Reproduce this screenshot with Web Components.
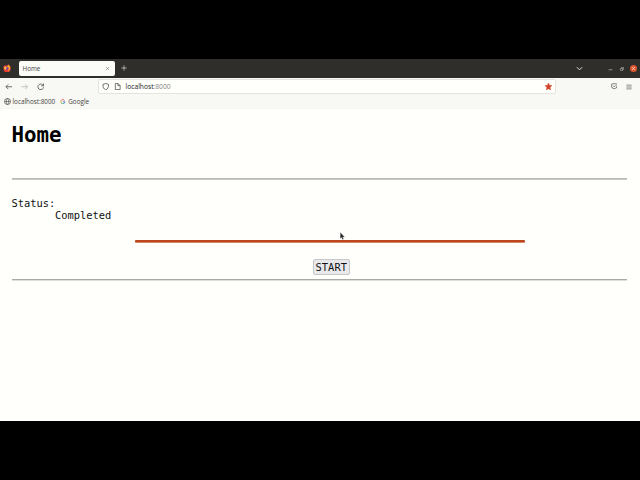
<!DOCTYPE html>
<html lang="en"><head><meta charset="utf-8"><title>Home</title>
<style>html,body{margin:0;height:480px;background:#000;overflow:hidden}</style></head>
<body><browser-window></browser-window>
<script>
const define = (name, html) => customElements.define(name, class extends HTMLElement {
  constructor() { super(); this.attachShadow({mode: 'open'}).innerHTML = html; }
});

const icons = {
  back: '<path d="M15 8H2M7 3 2 8l5 5"/>',
  forward: '<path d="M1 8h13M9 3l5 5-5 5"/>',
  reload: '<path d="M14 9A6 6 0 1 1 12 3.800L14 6M14 1v5H9"/>',
  shield: '<path d="M8 1 14 3c0 6-1 9-6 12C3 12 2 9 2 3Z"/>',
  page: '<path d="M3 1h6l5 5v9H3ZM9 1v5h5"/>',
  close: '<path d="m3 3 10 10M13 3 3 13"/>',
  plus: '<path d="M8 1v14M1 8h14"/>',
  chevron: '<path d="m2 5 6 6 6-6"/>',
  minimize: '<path d="M2 12h12"/>',
  restore: '<path d="M2 6h8v8H2ZM6 6V2h8v8h-4"/>',
  star: '<path fill="currentColor" stroke="currentColor" stroke-width="1" stroke-linejoin="round" d="m8 0 2.400 5.300 5.600.6-4.200 3.900L13 16l-5-3.100L3 16l1.200-6.200L0 5.900l5.600-.6Z"/>',
  pocket: '<path d="M3 2h10q2 0 2 2v3a7 7 0 0 1-14 0V4q0-2 2-2ZM4.500 6 8 9.500 11.500 6"/>',
  menu: '<path d="M1 3h14M1 8h14M1 13h14"/>',
  globe: '<circle cx="8" cy="8" r="7"/><path d="M1 8h14M8 1C4 5 4 11 8 15M8 1c4 4 4 10 0 14"/>',
  google: '<g stroke-width="2.800"><path stroke="#df5145" d="M13 4A6 6 0 0 0 3 5"/><path stroke="#e5b12e" d="M3 5a6 6 0 0 0 0 6"/><path stroke="#45a35c" d="M3 11a6 6 0 0 0 9 2"/><path stroke="#4d83d8" d="M12 13a6 6 0 0 0 2-5H8"/></g>',
  firefox: '<g stroke="none"><path fill="#e63b35" d="M1 5 3 2l1 2 3-2 2 2 2-3c3 2 5 5 4 9a7 7 0 0 1-14 0Z"/><path fill="#ff9f2e" d="M10 1c4 2 6 6 4 10-1 2-3 3-5 3 3-3 3-6-1-8Z"/><circle cx="7.500" cy="8.500" r="3.200" fill="#763bb1"/><path fill="#ffc641" d="M2 6c3-1 5 0 6 2-3 0-3 2-1 4-3 0-5-2-5-6Z"/></g>'
};
customElements.define('ui-icon', class extends HTMLElement {
  connectedCallback() {
    if (this.shadowRoot) return;
    const size = this.getAttribute('size') || 7;
    const weight = this.getAttribute('weight') || 1.7;
    this.attachShadow({mode: 'open'}).innerHTML = `<style>:host{display:block;flex:none;width:${size}px;height:${size}px}svg{display:block;width:100%;height:100%}</style>
    <svg viewBox="0 0 16 16" fill="none" stroke="currentColor" stroke-width="${weight}">${icons[this.getAttribute('name')]}</svg>`;
  }
});

define('tab-strip', `<style>
:host{display:flex;box-sizing:border-box;height:19px;background:#2f2e2b;color:#e8e7e3;align-items:center;padding:0 3px 0 3px}
.tab{display:flex;align-items:center;box-sizing:border-box;width:96px;height:15px;margin:0 6px 0 8px;padding:0 5px 0 3.500px;background:#fbfbf8;border-radius:2px;color:#44433f}
.tab span{flex:1}.tab ui-icon{color:#666}
.firefox,.plus,.down{margin-top:-1px}
.space{flex:1}.down{margin-right:25px}.min{margin-right:7px}.restore{margin-right:6px}
.close{display:grid;place-items:center;width:7px;height:7px;border-radius:50%;background:#dc5630;color:#fff}
</style><ui-icon class="firefox" name="firefox" size="8"></ui-icon><div class="tab"><span>Home</span><ui-icon name="close" size="5"></ui-icon></div><ui-icon class="plus" name="plus" size="6"></ui-icon><div class="space"></div>
<ui-icon class="down" name="chevron" size="7" weight="2.200"></ui-icon><ui-icon class="min" name="minimize" size="5"></ui-icon><ui-icon class="restore" name="restore" size="4"></ui-icon><div class="close"><ui-icon name="close" size="5"></ui-icon></div>`);

define('nav-bar', `<style>
:host{display:flex;box-sizing:border-box;height:18px;align-items:center;padding:0 8px 1px 5px;background:#f8f8f5;color:#4c4b48}
.forward{margin:0 8.500px 0 8px;color:#b4b4b0}
.address{display:flex;align-items:center;box-sizing:border-box;width:458px;height:15px;margin-left:53.500px;padding:0 3px;background:#fffffc;border:1px solid #e3e4de;border-radius:2px}
.page{margin:0 4.500px 0 5px}.url{flex:1;font-size:6.700px;color:#85847f}.url b{font-weight:400;color:#20201e}
.star{color:#cf4729}.space{flex:1}.menu{margin-left:9px}
</style><ui-icon name="back" size="7.500"></ui-icon><ui-icon class="forward" name="forward" size="7.500"></ui-icon><ui-icon name="reload" size="7.500"></ui-icon>
<div class="address"><ui-icon name="shield" size="7.500"></ui-icon><ui-icon class="page" name="page"></ui-icon><span class="url"><b>localhost</b>:8000</span><ui-icon class="star" name="star"></ui-icon></div>
<div class="space"></div><ui-icon name="pocket" size="6.500"></ui-icon><ui-icon class="menu" name="menu" size="6"></ui-icon>`);

define('bookmark-bar', `<style>
:host{display:flex;box-sizing:border-box;height:13px;align-items:center;padding:0 4px 1px;background:#f8f8f5;color:#454440;border-bottom:1px solid #f4f4f1}
.google{margin:0 2.500px 0 5px}.globe{margin-right:1.500px}
</style><ui-icon class="globe" name="globe" weight="1.400"></ui-icon><span>localhost:8000</span><ui-icon class="google" name="google" size="5.500"></ui-icon><span>Google</span>`);

define('status-panel', `<style>
:host{display:block;padding:17px 0 18.500px;line-height:12.500px}
.value{padding-left:43.500px;margin-top:-.5px}
</style><div>Status:</div><div class="value"><slot></slot></div>`);

define('progress-line', `<style>
:host{display:block;width:390px;height:3px;margin-left:123.500px;border-radius:1px;background:linear-gradient(#b94620 0 1px,#c3441a 1px 2px,#d18761 2px)}
</style>`);

define('start-button', `<style>
:host{display:flex;justify-content:center;padding:16px 0 4px;margin-left:24px}
button{box-sizing:border-box;width:37px;height:16px;padding:0;font:inherit;line-height:14px;color:#111;background:#e9e9ec;border:1px solid #c7c7c6;border-radius:2px}
</style><button><slot></slot></button>`);

define('home-page', `<style>
:host{display:block;box-sizing:border-box;height:312px;background:#fffffc;color:#111;padding:13px 13px 0 11.500px;font:10.400px "DejaVu Sans Mono",monospace}
h1{font-size:20.800px;line-height:26px;margin:0 0 30px;color:#000}
.rule{height:2px;background:linear-gradient(#b9b9b7 50%,#c9c9c6 50%)}
.last{background:linear-gradient(#a9a9a7 50%,#dededb 50%)}
</style><h1>Home</h1><div class="rule"></div><status-panel>Completed</status-panel><progress-line></progress-line><start-button>START</start-button><div class="rule last"></div>`);

define('mouse-pointer', `<style>:host{position:absolute;left:340px;top:231.500px;width:5px;height:9px}svg{display:block}</style>
<svg width="5" height="9" viewBox="0 0 5 9"><path d="M.3.4v6l1.300-1 1 2.200 1-.5-1-2h1.900Z" fill="#222" stroke="#aaa" stroke-width=".3"/></svg>`);

define('browser-window', `<style>
:host{display:block;padding-top:59px;font:6.350px/9px "Open Sans","Noto Sans",sans-serif}
</style><tab-strip></tab-strip><nav-bar></nav-bar><bookmark-bar></bookmark-bar><home-page></home-page><mouse-pointer></mouse-pointer>`);
</script></body></html>
